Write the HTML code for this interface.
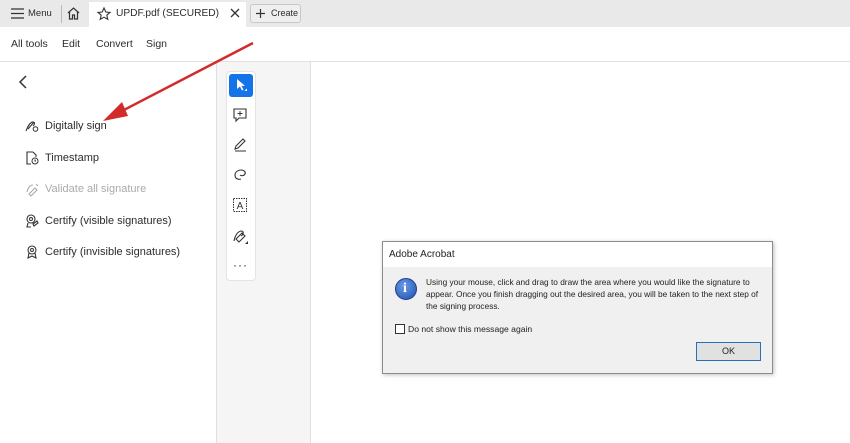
<!DOCTYPE html>
<html><head><meta charset="utf-8"><style>
*{margin:0;padding:0;box-sizing:border-box}
body{width:850px;height:443px;overflow:hidden;position:relative;background:#fff;font-family:"Liberation Sans",sans-serif;color:#222}
.abs{position:absolute}
.tabbar{left:0;top:0;width:850px;height:27px;background:#e9e9e9}
.t{font-size:12px;color:#2c2c2c;white-space:nowrap}
svg{overflow:visible}
.item{position:absolute;left:25px;font-size:11px;color:#2c2c2c;display:flex;align-items:center;gap:6px;white-space:nowrap}
.item svg{width:14px;height:14px}
</style></head><body>
<div class="abs tabbar"></div>
<svg class="abs" style="left:11px;top:8px" width="13" height="11"><path d="M0 1h13M0 5.5h13M0 10h13" stroke="#333" stroke-width="1.3"/></svg>
<div class="abs t" style="left:28px;top:8px;font-size:9.5px">Menu</div>
<div class="abs" style="left:61px;top:5px;width:1px;height:18px;background:#bbb"></div>
<svg class="abs" style="left:67px;top:7px" width="13" height="13"><path d="M1 6L6.5 1 12 6M2.5 5v7h3v-4h2v4h3V5" fill="none" stroke="#333" stroke-width="1.2"/></svg>
<div class="abs" style="left:89px;top:2px;width:157px;height:25px;background:#fff"></div>
<svg class="abs" style="left:97px;top:7px" width="14" height="14"><path d="M7 1l1.8 4 4.2.4-3.2 2.8 1 4.2L7 10.2 3.2 12.4l1-4.2L1 5.4l4.2-.4z" fill="none" stroke="#333" stroke-width="1.1"/></svg>
<div class="abs t" style="left:116px;top:8px;font-size:10.2px">UPDF.pdf (SECURED)</div>
<svg class="abs" style="left:231px;top:9px" width="8" height="8"><path d="M0 0l8 8M8 0L0 8" stroke="#333" stroke-width="1.3"/></svg>
<div class="abs" style="left:250px;top:4px;width:51px;height:19px;border:1px solid #c8c8c8;border-radius:3px;background:#efefef"></div>
<svg class="abs" style="left:256px;top:9px" width="9" height="9"><path d="M4.5 0v9M0 4.5h9" stroke="#333" stroke-width="1.2"/></svg>
<div class="abs t" style="left:271px;top:8px;font-size:9px">Create</div>
<div class="abs t" style="left:11px;top:38px;font-size:10.5px">All tools</div>
<div class="abs t" style="left:62px;top:38px;font-size:10.5px">Edit</div>
<div class="abs t" style="left:96px;top:38px;font-size:10.5px">Convert</div>
<div class="abs t" style="left:146px;top:38px;font-size:10.5px">Sign</div>
<div class="abs" style="left:0;top:61px;width:850px;height:1px;background:#e2e2e2"></div>
<svg class="abs" style="left:19px;top:76px" width="8" height="12"><path d="M7 0L1 6l6 6" fill="none" stroke="#333" stroke-width="1.5"/></svg>
<div class="item" style="top:119px"><svg viewBox="0 0 14 14"><path d="M1 12c2-5 4-9 7-9 2 0 2 2 0 4M3 10l6-7" fill="none" stroke="#333" stroke-width="1.1"/><circle cx="10.5" cy="10" r="2.3" fill="none" stroke="#333"/></svg>Digitally sign</div>
<div class="item" style="top:151px"><svg viewBox="0 0 14 14"><path d="M8 1H2v12h4M8 1l3 3v2" fill="none" stroke="#333" stroke-width="1.1"/><circle cx="10" cy="10" r="3" fill="none" stroke="#333"/><path d="M10 8.5V10h1" stroke="#333" fill="none"/></svg>Timestamp</div>
<div class="item" style="top:182px;color:#aaa"><svg viewBox="0 0 14 14"><path d="M2 10c1-4 3-7 6-7M4 12l6-6 2 2-6 6zM11 2l2 2" fill="none" stroke="#aaa" stroke-width="1.1"/></svg>Validate all signature</div>
<div class="item" style="top:214px"><svg viewBox="0 0 14 14"><circle cx="6" cy="5" r="4" fill="none" stroke="#333" stroke-width="1.1"/><circle cx="6" cy="5" r="1.5" fill="none" stroke="#333"/><path d="M3 9l-1 4h4M8 10l4-3 1 2-4 3z" fill="none" stroke="#333" stroke-width="1.1"/></svg>Certify (visible signatures)</div>
<div class="item" style="top:245px"><svg viewBox="0 0 14 14"><circle cx="7" cy="5" r="4" fill="none" stroke="#333" stroke-width="1.1"/><circle cx="7" cy="5" r="1.5" fill="none" stroke="#333"/><path d="M4 8l-1 5 4-2 4 2-1-5" fill="none" stroke="#333" stroke-width="1.1"/></svg>Certify (invisible signatures)</div>
<div class="abs" style="left:216px;top:62px;width:95px;height:381px;background:#f5f5f5;border-left:1px solid #e0e0e0;border-right:1px solid #e0e0e0"></div>
<div class="abs" style="left:226px;top:71px;width:30px;height:210px;background:#fff;border:1px solid #e4e4e4;border-radius:4px"></div>
<div class="abs" style="left:229px;top:74px;width:24px;height:23px;background:#1473e6;border-radius:3px"></div>
<svg class="abs" style="left:236px;top:79px" width="12" height="14"><path d="M1 0v10l3-2.5 2 4 1.5-.8-2-3.8H9z" fill="#fff"/><path d="M11 12l0-2.5L8.5 12z" fill="#fff"/></svg>
<svg class="abs" style="left:233px;top:108px" width="14" height="14"><path d="M1 1h12v9H6l-3 3v-3H1z" fill="none" stroke="#333" stroke-width="1.1"/><path d="M7 3v5M4.5 5.5h5" stroke="#333"/></svg>
<svg class="abs" style="left:233px;top:138px" width="14" height="14"><path d="M2 11l1-3 7-7 2 2-7 7zM2 13h11" fill="none" stroke="#333" stroke-width="1.1"/></svg>
<svg class="abs" style="left:234px;top:169px" width="13" height="12"><path d="M7 10C3 11 1 9 1 6s3-5 6-5 5 2 4 4-4 2-5 1" fill="none" stroke="#333" stroke-width="1.1"/></svg>
<svg class="abs" style="left:233px;top:198px" width="14" height="14"><rect x="0.5" y="0.5" width="13" height="13" fill="none" stroke="#333" stroke-dasharray="1.5 1"/><text x="7" y="11" font-size="10" text-anchor="middle" font-family="Liberation Sans" fill="#333">A</text></svg>
<svg class="abs" style="left:233px;top:229px" width="16" height="16"><path d="M1 12c1-5 3-9 7-10 3 0 3 3 0 5M3 10l6-6 3 3-6 6z" fill="none" stroke="#333" stroke-width="1.1"/><path d="M15 15v-3l-3 3z" fill="#333"/></svg>
<div class="abs t" style="left:233px;top:258px;font-size:12px;letter-spacing:1px">···</div>
<svg class="abs" style="left:0;top:0" width="850" height="443"><line x1="253" y1="43" x2="120" y2="112" stroke="#d32a2a" stroke-width="2.5"/><path d="M103 121L122 102 128 116z" fill="#d32a2a"/></svg>
<div class="abs" style="left:382px;top:241px;width:391px;height:133px;background:#f0f0f0;border:1px solid #8c8c8c;box-shadow:1px 1px 4px rgba(0,0,0,.25)">
<div style="height:25px;background:#fff;font-size:10px;padding:7px 0 0 6px;color:#222">Adobe Acrobat</div>
<div class="abs" style="left:12px;top:36px;width:22px;height:22px;border-radius:50%;background:radial-gradient(circle at 40% 35%,#6a9be6,#1c4fb0);border:1px solid #1d3f8a"></div>
<div class="abs" style="left:20px;top:39px;color:#fff;font-weight:bold;font-size:14px;font-family:'Liberation Serif',serif">i</div>
<div class="abs" style="left:43px;top:34px;width:335px;font-size:8.3px;line-height:12.2px;color:#222">Using your mouse, click and drag to draw the area where you would like the signature to appear. Once you finish dragging out the desired area, you will be taken to the next step of the signing process.</div>
<div class="abs" style="left:12px;top:82px;width:10px;height:10px;background:#fff;border:1px solid #333"></div>
<div class="abs" style="left:25px;top:82px;font-size:8.6px;color:#222">Do not show this message again</div>
<div class="abs" style="left:313px;top:100px;width:65px;height:19px;background:#e1e1e1;border:1px solid #2a6fba;font-size:9px;text-align:center;line-height:17px">OK</div>
</div>
</body></html>
